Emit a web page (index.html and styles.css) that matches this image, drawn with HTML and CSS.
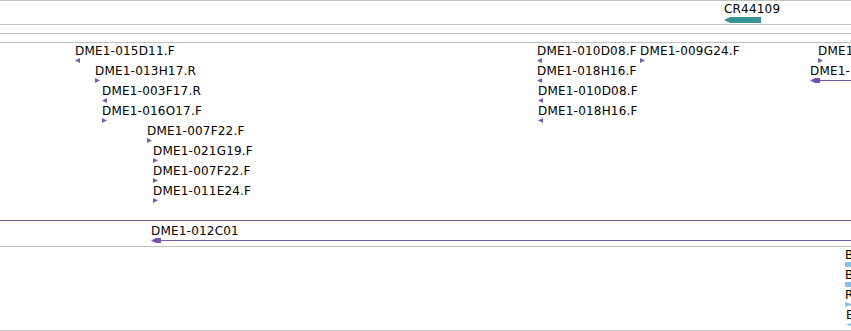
FILE: index.html
```html
<!DOCTYPE html>
<html>
<head>
<link rel="stylesheet" href="styles.css">
<title>Tracks</title>
</head>
<body>
  <div class="view">
    <div class="track genes">
      <div class="feat" style="left:724px;top:1px">
        <div class="label">CR44109</div>
        <div class="bar teal" style="width:37px"></div>
      </div>
    </div>
    <div class="track empty-a"></div>
    <div class="track empty-b"></div>
    <div class="track clones">
      <div class="feat" style="left:75px;top:1px"><div class="label">DME1-015D11.F</div><div class="arr left"></div></div>
      <div class="feat" style="left:95px;top:21px"><div class="label">DME1-013H17.R</div><div class="arr right"></div></div>
      <div class="feat" style="left:102px;top:41px"><div class="label">DME1-003F17.R</div><div class="arr left"></div></div>
      <div class="feat" style="left:102px;top:61px"><div class="label">DME1-016O17.F</div><div class="arr right"></div></div>
      <div class="feat" style="left:147px;top:81px"><div class="label">DME1-007F22.F</div><div class="arr right"></div></div>
      <div class="feat" style="left:153px;top:101px"><div class="label">DME1-021G19.F</div><div class="arr right"></div></div>
      <div class="feat" style="left:153px;top:121px"><div class="label">DME1-007F22.F</div><div class="arr right"></div></div>
      <div class="feat" style="left:153px;top:141px"><div class="label">DME1-011E24.F</div><div class="arr right"></div></div>
      <div class="feat wide" style="left:0;top:161px"><div class="label"></div><div class="line"></div></div>
      <div class="feat wide" style="left:151px;top:181px"><div class="label">DME1-012C01</div><div class="long"><div class="head"></div><div class="line"></div></div></div>

      <div class="feat" style="left:537px;top:1px"><div class="label">DME1-010D08.F</div><div class="arr left"></div></div>
      <div class="feat" style="left:640px;top:1px"><div class="label">DME1-009G24.F</div><div class="arr right"></div></div>
      <div class="feat" style="left:537px;top:21px"><div class="label">DME1-018H16.F</div><div class="arr left"></div></div>
      <div class="feat" style="left:538px;top:41px"><div class="label">DME1-010D08.F</div><div class="arr left"></div></div>
      <div class="feat" style="left:538px;top:61px"><div class="label">DME1-018H16.F</div><div class="arr left"></div></div>
      <div class="feat" style="left:818px;top:1px"><div class="label">DME1</div><div class="arr right"></div></div>
      <div class="feat wide" style="left:810px;top:21px"><div class="label">DME1-</div><div class="long"><div class="head"></div><div class="line"></div></div></div>
    </div>
    <div class="track reads">
      <div class="feat" style="left:845px;top:1px"><div class="label">B</div><div class="mark"></div></div>
      <div class="feat" style="left:845px;top:21px"><div class="label">B</div><div class="mark"></div></div>
      <div class="feat" style="left:845px;top:41px"><div class="label">R</div><div class="mark right"></div></div>
      <div class="feat" style="left:846px;top:61px"><div class="label">E</div><div class="mark left"></div></div>
    </div>
  </div>
</body>
</html>
```

FILE: styles.css
```css
body {
  margin: 0;
  background: #fff;
  font-family: "DejaVu Sans", sans-serif;
  font-size: 12px;
  color: #000;
  overflow: hidden;
}

.view {
  width: 851px;
  height: 331px;
  overflow: hidden;
}

.track {
  position: relative;
  border-top: 1px solid #c0c0c0;
  overflow: hidden;
}

.genes   { height: 23px; }
.empty-a { height: 8px; }
.empty-b { height: 8px; }
.clones  { height: 203px; }
.reads   { height: 83px; border-bottom: 1px solid #c0c0c0; }

/* features sit at their genomic coordinate */
.feat {
  position: absolute;
  white-space: nowrap;
}

.feat.wide {
  right: 0;
}

.label {
  height: 14px;
  line-height: 14px;
  letter-spacing: 0.2px;
}

.bar {
  margin-top: 1px;
  height: 6px;
  clip-path: polygon(0 50%, 6px 0, 100% 0, 100% 100%, 6px 100%);
}

.teal {
  background: #3b9292;
}

.arr {
  width: 5px;
  height: 5px;
  background: #7a5cb0;
}

.arr.left  { clip-path: polygon(0 50%, 100% 0, 100% 100%); }
.arr.right { clip-path: polygon(0 0, 100% 50%, 0 100%); }

.long {
  display: flex;
  align-items: center;
  height: 5px;
}

.head {
  width: 10px;
  height: 5px;
  flex: none;
  background: #7552ad;
  clip-path: polygon(0 50%, 5px 0, 100% 0, 100% 100%, 5px 100%);
}

.line {
  flex: 1;
  height: 1px;
  background: #7558ac;
}

.feat.wide > .line {
  margin-top: 2px;
}

.mark {
  width: 8px;
  height: 5px;
  background: #86c0e4;
}

.mark.right { clip-path: polygon(0 0, 100% 50%, 0 100%); }
.mark.left  { clip-path: polygon(0 50%, 100% 0, 100% 100%); }
```
